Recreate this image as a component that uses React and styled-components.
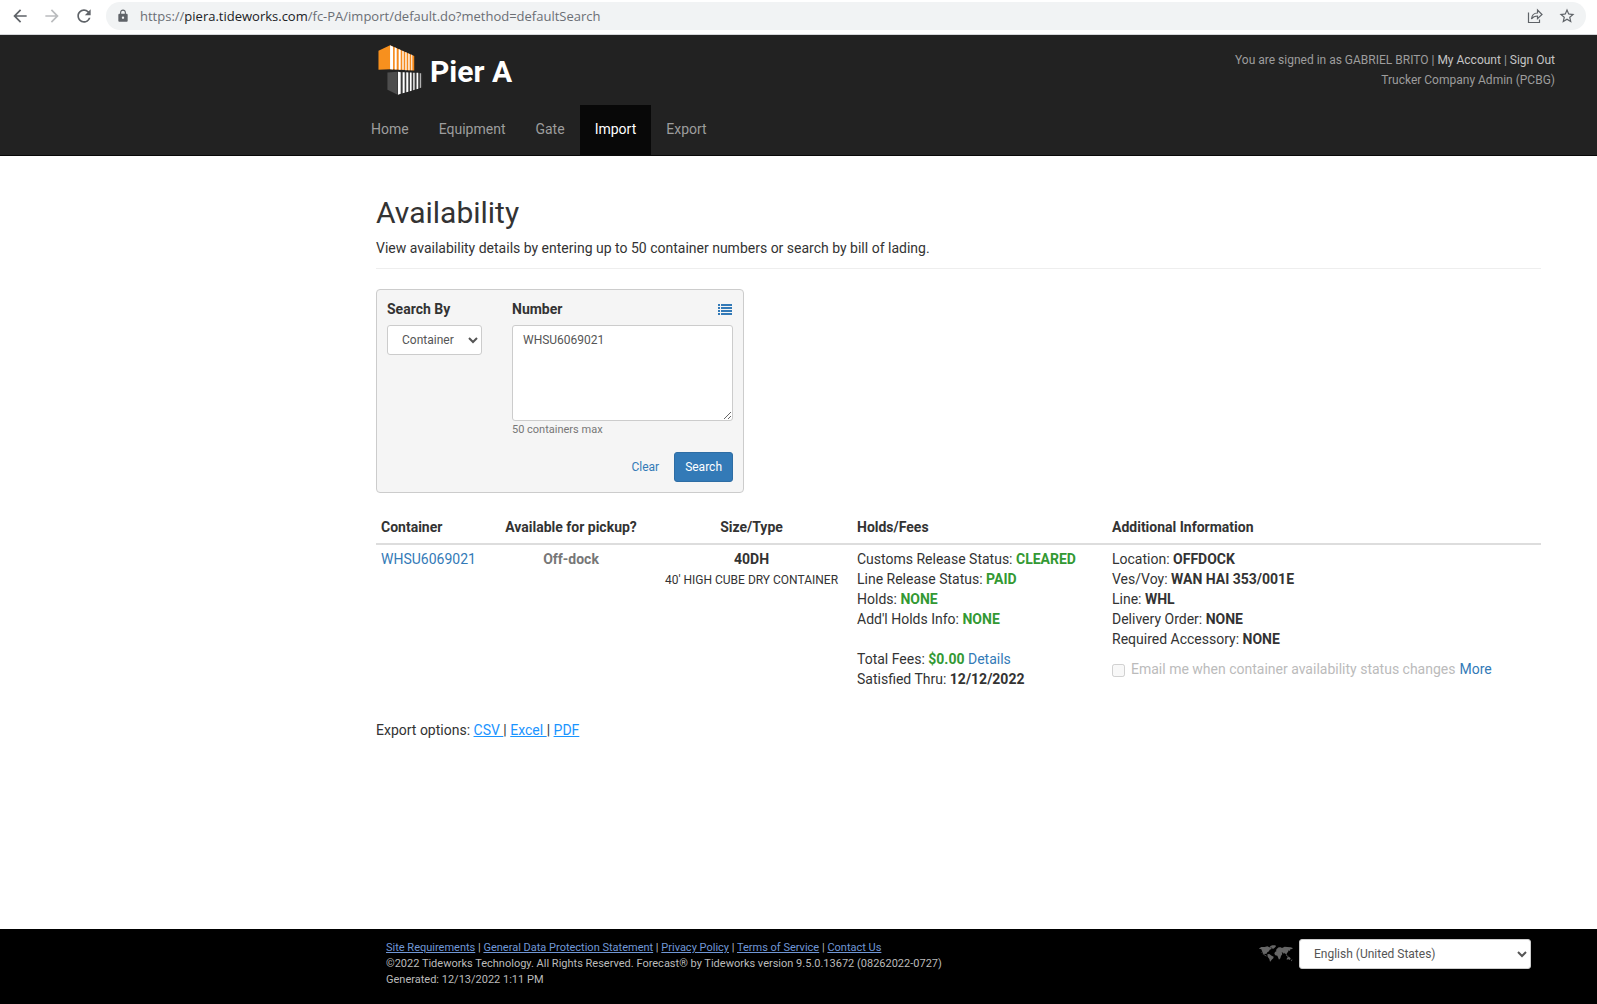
import { useState } from 'react';
import styled, { createGlobalStyle } from 'styled-components';
import {
  MdArrowBack,
  MdArrowForward,
  MdLock,
  MdRefresh,
  MdStarBorder,
} from 'react-icons/md';

const GlobalStyle = createGlobalStyle`
  *, *::before, *::after {
    box-sizing: border-box;
  }

  body {
    margin: 0;
    background: #fff;
    color: #333;
    font-family: Roboto, Arial, sans-serif;
    font-size: 14px;
    line-height: 20px;
  }

  a {
    color: #337ab7;
    text-decoration: none;
  }

  input, select, textarea, button {
    font-family: inherit;
  }
`;

const Page = styled.div`
  display: flex;
  flex-direction: column;
  min-height: 100vh;
`;

const BrowserBar = styled.div`
  display: flex;
  align-items: center;
  gap: 12px;
  height: 35px;
  padding: 0 11px 3px 10px;
  border-bottom: 1px solid #d5d7da;
  background: #fff;
`;

const BrowserButton = styled.button`
  display: flex;
  padding: 0;
  border: 0;
  background: none;
  color: ${({ $muted }) => ($muted ? '#babcbe' : '#5f6368')};
`;

const AddressBar = styled.div`
  display: flex;
  flex: 1;
  align-items: center;
  gap: 10px;
  height: 28px;
  padding: 0 10px;
  border-radius: 14px;
  background: #f1f3f4;
  color: #5f6368;
`;

const Url = styled.span`
  flex: 1;
  font-family: 'Open Sans', sans-serif;
  font-size: 13px;
  color: #6b6f74;

  b {
    font-weight: 400;
    color: #202124;
  }
`;

const AddressActions = styled.div`
  display: flex;
  gap: 14px;
`;

const Header = styled.header`
  display: flex;
  justify-content: space-between;
  padding: 0 42px 0 356px;
  border-bottom: 1px solid #080808;
  background: #222;
`;

const Brand = styled.a`
  display: flex;
  align-items: center;
  gap: 7px;
  height: 70px;
  padding-left: 22px;
  color: #fff;
  font-size: 30px;
  font-weight: 700;

  span {
    padding-top: 3px;
  }
`;

const NavList = styled.ul`
  display: flex;
  margin: 0;
  padding: 0;
  list-style: none;
`;

const NavLink = styled.a`
  display: block;
  padding: 14px 15px 16px;
  background: ${({ $active }) => ($active ? '#080808' : 'transparent')};
  color: ${({ $active }) => ($active ? '#fff' : '#9d9d9d')};
`;

const UserInfo = styled.div`
  padding-top: 15px;
  color: #9d9d9d;
  font-size: 12px;
  text-align: right;

  a {
    color: #c4c4c4;
  }
`;

const Main = styled.main`
  flex: 1;
  padding: 40px 56px 40px 376px;
`;

const Title = styled.h1`
  margin: 0 0 9px;
  font-size: 30px;
  font-weight: 400;
  line-height: 33px;
`;

const Intro = styled.p`
  margin: 0 0 20px;
  padding-bottom: 10px;
  border-bottom: 1px solid #eee;
`;

const SearchPanel = styled.form`
  display: grid;
  grid-template-columns: 95px 221px;
  justify-content: space-between;
  width: 368px;
  padding: 9px 10px 10px;
  border: 1px solid #ccc;
  border-radius: 4px;
  background: #f5f5f5;
`;

const FieldHeader = styled.div`
  display: flex;
  align-items: center;
  justify-content: space-between;
  margin-bottom: 6px;

  label {
    font-weight: 700;
  }

  a {
    display: flex;
    padding-right: 1px;
  }
`;

const Select = styled.select`
  display: block;
  width: 100%;
  height: 30px;
  padding: 5px 10px;
  border: 1px solid #ccc;
  border-radius: 3px;
  background: #fff;
  color: #555;
  font-size: 12px;
  line-height: 18px;
`;

const NumberBox = styled.textarea`
  display: block;
  width: 100%;
  height: 96px;
  padding: 5px 10px;
  border: 1px solid #ccc;
  border-radius: 3px;
  background: #fff;
  color: #555;
  font-size: 12px;
  line-height: 18px;
`;

const Hint = styled.div`
  color: #777;
  font-size: 11px;
  line-height: 18px;
`;

const Actions = styled.div`
  display: flex;
  grid-column: 1 / -1;
  justify-content: flex-end;
  gap: 4px;
  margin-top: 13px;
`;

const Button = styled.button`
  height: 30px;
  padding: 5px 10px;
  border: 1px solid ${({ $primary }) => ($primary ? '#2e6da4' : 'transparent')};
  border-radius: 3px;
  background: ${({ $primary }) => ($primary ? '#337ab7' : 'transparent')};
  color: ${({ $primary }) => ($primary ? '#fff' : '#337ab7')};
  font-size: 12px;
  line-height: 18px;
`;

const Results = styled.table`
  width: 100%;
  margin: 19px 0 26px;
  border-collapse: collapse;
  table-layout: fixed;
`;

const HeadCell = styled.th`
  width: ${({ $width }) => $width || 'auto'};
  padding: 5px 5px 6px;
  border-bottom: 2px solid #ddd;
  font-weight: 700;
  text-align: ${({ $center }) => ($center ? 'center' : 'left')};
`;

const Cell = styled.td`
  padding: 4px 5px 5px;
  text-align: ${({ $center }) => ($center ? 'center' : 'left')};
  vertical-align: top;
`;

const Status = styled.strong`
  color: ${({ $tone }) =>
    ({ good: '#339933', muted: '#777' })[$tone] || 'inherit'};
`;

const Small = styled.div`
  font-size: 12px;
  line-height: 22px;
`;

const Gap = styled.div`
  height: 20px;
`;

const Notify = styled.div`
  display: flex;
  align-items: center;
  gap: 4px;
  margin-top: 10px;
  color: #bbb;

  input {
    margin: 2px 2px 0 0;
  }
`;

const ExportLink = styled.a`
  color: #1a94ff;
  text-decoration: underline;
`;

const Footer = styled.footer`
  display: flex;
  justify-content: space-between;
  min-height: 75px;
  padding: 10px 66px 10px 386px;
  background: #000;
`;

const Legal = styled.div`
  padding-top: 1px;
  color: #bbb;
  font-size: 11px;
  line-height: 16px;

  p {
    margin: 0;
  }

  a {
    color: #7097d6;
    text-decoration: underline;
  }
`;

const Language = styled.div`
  display: flex;
  align-items: flex-start;
  gap: 6px;
  width: 272px;

  svg {
    flex: none;
    margin-top: 6px;
  }
`;

const Logo = () => (
  <svg width="45" height="50" viewBox="24 27 133 151" aria-hidden="true">
    <path fill="#f7901e" d="M24 44 59 28v72l-35 2z" />
    <path fill="#f58a1c" d="M59 28l73 32v44l-73-4z" />
    <path
      fill="#fff"
      d="M59 28l9 4v69l-9-1zM73 34l6 3v64h-6zM85 39l6 3v60h-6zM96 44l4 2v56h-4zM105 48l4 2v53h-4zM114 52l4 2v49h-4zM123 56l3 1v46h-3z"
    />
    <path fill="#4d4d4d" d="M51 110l31-2v69l-31-15z" />
    <path fill="#3a3a3a" d="M82 108l74 4v43l-74 22z" />
    <path
      fill="#fff"
      d="M83 108l8 1v65l-8 3zM97 109h6v62l-6 2zM108 109l6 1v58l-6 2zM119 110h5v55l-5 2zM129 111h4v51l-4 2zM139 111h5v48l-5 2z"
    />
    <path fill="#c4c4c4" d="M149 112h3v44l-3 1z" />
  </svg>
);

const ShareIcon = () => (
  <svg
    width="18"
    height="18"
    viewBox="0 0 18 18"
    fill="none"
    stroke="currentColor"
    strokeWidth="1.2"
    aria-hidden="true"
  >
    <path d="M2.5 5.5v10h11v-3" />
    <path d="M5.5 12c.4-4 2.7-6 6-6V3l4.5 4.5-4.5 4.2V9c-2.5 0-4.500.8-6 3z" />
  </svg>
);

const ListIcon = () => (
  <svg width="14" height="11" viewBox="0 0 14 11" fill="#337ab7" aria-hidden="true">
    {[0, 3, 6, 9].map(y => (
      <g key={y}>
        <rect x="0" y={y} width="2" height="2" />
        <rect x="3" y={y} width="11" height="2" />
      </g>
    ))}
  </svg>
);

const WorldIcon = () => (
  <svg width="34" height="17" viewBox="0 0 102 51" fill="#666" aria-hidden="true">
    <path d="M1 10l6-4 10 0 8-2 6 3 5 0 2 5-6 2-2 5-5 3-3 5-5-1-1 3 4 2 4 3-3 0-7-5-3-6-2-5-2-5-6-2-5 2z" />
    <path d="M32 4l8-3 9 0 2 3-4 4-5 4-4-4z" />
    <path d="M25 28l6-1 7 5 6 3-1 5-5 4-3 5-2 1-2-8-5-7z" />
    <path d="M50 18l3-6 6-5 6 0 4 2 8-4 8 1 10 1 6 2-1 3-6 1-1 5-4-2-2 5-3 3-2 5-3-3-2-3-2 4-3-4-4-1 2 5-4 6-2 7-4 4-3-7-2-5-6-1-3-5 2-5 5-3-2-2z" />
    <path d="M81 28l4 4 5 1-4 2-5-4zM84 38l6-3 5 5-2 5-5-2-5 1z" />
    <path d="M97 45l3-2-1 4-3 2zM6 21l3 1-2 1zM10 26l3 1-2 1z" />
  </svg>
);

const navItems = ['Home', 'Equipment', 'Gate', 'Import', 'Export'];

const holds = [
  { label: 'Customs Release Status:', value: 'CLEARED' },
  { label: 'Line Release Status:', value: 'PAID' },
  { label: 'Holds:', value: 'NONE' },
  { label: "Add'l Holds Info:", value: 'NONE' },
];

const additionalInfo = [
  { label: 'Location:', value: 'OFFDOCK' },
  { label: 'Ves/Voy:', value: 'WAN HAI 353/001E' },
  { label: 'Line:', value: 'WHL' },
  { label: 'Delivery Order:', value: 'NONE' },
  { label: 'Required Accessory:', value: 'NONE' },
];

const SearchForm = () => {
  const [searchBy, setSearchBy] = useState('container');
  const [numbers, setNumbers] = useState('WHSU6069021');

  return (
    <SearchPanel onSubmit={e => e.preventDefault()}>
      <div>
        <FieldHeader>
          <label htmlFor="searchBy">Search By</label>
        </FieldHeader>
        <Select
          id="searchBy"
          value={searchBy}
          onChange={e => setSearchBy(e.target.value)}
        >
          <option value="container">Container</option>
        </Select>
      </div>
      <div>
        <FieldHeader>
          <label htmlFor="numbers">Number</label>
          <a href="#list" aria-label="List">
            <ListIcon />
          </a>
        </FieldHeader>
        <NumberBox
          id="numbers"
          spellCheck={false}
          value={numbers}
          onChange={e => setNumbers(e.target.value)}
        />
        <Hint>50 containers max</Hint>
      </div>
      <Actions>
        <Button type="button" onClick={() => setNumbers('')}>
          Clear
        </Button>
        <Button type="submit" $primary>
          Search
        </Button>
      </Actions>
    </SearchPanel>
  );
};

const ResultsTable = () => (
  <Results>
    <thead>
      <tr>
        <HeadCell $width="115px">Container</HeadCell>
        <HeadCell $width="160px" $center>
          Available for pickup?
        </HeadCell>
        <HeadCell $width="201px" $center>
          Size/Type
        </HeadCell>
        <HeadCell $width="255px">Holds/Fees</HeadCell>
        <HeadCell>Additional Information</HeadCell>
      </tr>
    </thead>
    <tbody>
      <tr>
        <Cell>
          <a href="#WHSU6069021">WHSU6069021</a>
        </Cell>
        <Cell $center>
          <Status $tone="muted">Off-dock</Status>
        </Cell>
        <Cell $center>
          <Status>40DH</Status>
          <Small>40' HIGH CUBE DRY CONTAINER</Small>
        </Cell>
        <Cell>
          {holds.map(({ label, value }) => (
            <div key={label}>
              {label} <Status $tone="good">{value}</Status>
            </div>
          ))}
          <Gap />
          <div>
            Total Fees: <Status $tone="good">$0.00</Status>{' '}
            <a href="#details">Details</a>
          </div>
          <div>
            Satisfied Thru: <Status>12/12/2022</Status>
          </div>
        </Cell>
        <Cell>
          {additionalInfo.map(({ label, value }) => (
            <div key={label}>
              {label} <Status>{value}</Status>
            </div>
          ))}
          <Notify>
            <input type="checkbox" id="notify" disabled />
            <label htmlFor="notify">
              Email me when container availability status changes
            </label>
            <a href="#more">More</a>
          </Notify>
        </Cell>
      </tr>
    </tbody>
  </Results>
);

const App = () => {
  const [language, setLanguage] = useState('en-US');

  return (
    <Page>
      <GlobalStyle />
      <BrowserBar>
        <BrowserButton type="button" aria-label="Back">
          <MdArrowBack size={20} />
        </BrowserButton>
        <BrowserButton type="button" aria-label="Forward" $muted>
          <MdArrowForward size={20} />
        </BrowserButton>
        <BrowserButton type="button" aria-label="Reload">
          <MdRefresh size={20} />
        </BrowserButton>
        <AddressBar>
          <MdLock size={14} />
          <Url>
            https://<b>piera.tideworks.com</b>
            /fc-PA/import/default.do?method=defaultSearch
          </Url>
          <AddressActions>
            <BrowserButton type="button" aria-label="Share">
              <ShareIcon />
            </BrowserButton>
            <BrowserButton type="button" aria-label="Bookmark">
              <MdStarBorder size={18} />
            </BrowserButton>
          </AddressActions>
        </AddressBar>
      </BrowserBar>

      <Header>
        <div>
          <Brand href="#home">
            <Logo />
            <span>Pier A</span>
          </Brand>
          <nav>
            <NavList>
              {navItems.map(item => (
                <li key={item}>
                  <NavLink
                    href={`#${item.toLowerCase()}`}
                    $active={item === 'Import'}
                  >
                    {item}
                  </NavLink>
                </li>
              ))}
            </NavList>
          </nav>
        </div>
        <UserInfo>
          <div>
            You are signed in as GABRIEL BRITO | <a href="#account">My Account</a>{' '}
            | <a href="#signout">Sign Out</a>
          </div>
          <div>Trucker Company Admin (PCBG)</div>
        </UserInfo>
      </Header>

      <Main>
        <Title>Availability</Title>
        <Intro>
          View availability details by entering up to 50 container numbers or
          search by bill of lading.
        </Intro>
        <SearchForm />
        <ResultsTable />
        <div>
          Export options: <ExportLink href="#csv">CSV </ExportLink>|{' '}
          <ExportLink href="#excel">Excel </ExportLink>|{' '}
          <ExportLink href="#pdf">PDF</ExportLink>
        </div>
      </Main>

      <Footer>
        <Legal>
          <p>
            <a href="#requirements">Site Requirements</a> |{' '}
            <a href="#gdpr">General Data Protection Statement</a> |{' '}
            <a href="#privacy">Privacy Policy</a> |{' '}
            <a href="#terms">Terms of Service</a> |{' '}
            <a href="#contact">Contact Us</a>
          </p>
          <p>
            ©2022 Tideworks Technology. All Rights Reserved. Forecast® by
            Tideworks version 9.5.0.13672 (08262022-0727)
          </p>
          <p>Generated: 12/13/2022 1:11 PM</p>
        </Legal>
        <Language>
          <WorldIcon />
          <Select
            aria-label="Language"
            value={language}
            onChange={e => setLanguage(e.target.value)}
          >
            <option value="en-US">English (United States)</option>
          </Select>
        </Language>
      </Footer>
    </Page>
  );
};

export default App;
